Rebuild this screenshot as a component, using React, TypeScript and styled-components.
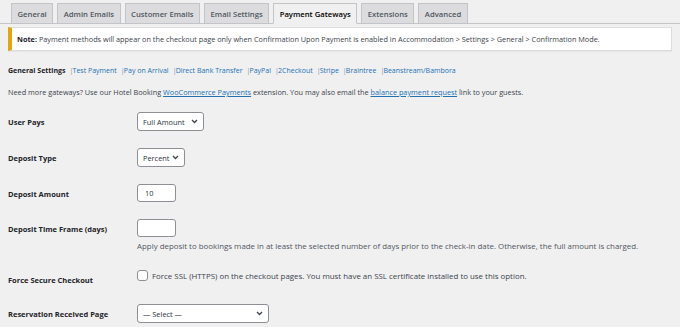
import React from "react";
import styled, { createGlobalStyle } from "styled-components";

const Global = createGlobalStyle`
  html, body { margin: 0; padding: 0; background: #f0f0f1; }
  body { font-family: "Open Sans", "Noto Sans", sans-serif; font-size: 7.3px; color: #3c434a; }
  * { box-sizing: border-box; }
`;

const Page = styled.div`
  padding: 3px 8px 0 8px;
  width: 680px;
  height: 327px;
  overflow: hidden;
`;

const TabBar = styled.nav`
  display: flex;
  gap: 4px;
  border-bottom: 1px solid #c3c4c7;
  margin: 0 -8px;
  padding: 0 0 0 11px;
  height: 21px;
`;

const Tab = styled.div<{ $active?: boolean }>`
  padding: 0 5.5px;
  display: flex;
  align-items: center;
  font-weight: 600;
  font-size: 7.7px;
  color: ${(p) => (p.$active ? "#000" : "#50575e")};
  background: ${(p) => (p.$active ? "#f0f0f1" : "#dcdcde")};
  border: 1px solid #c3c4c7;
  border-bottom: ${(p) => (p.$active ? "1px solid #f0f0f1" : "none")};
  margin-bottom: ${(p) => (p.$active ? "-1px" : "0")};
  height: ${(p) => (p.$active ? "21px" : "20px")};
  align-self: flex-end;
`;

const Notice = styled.div`
  margin-top: 3px;
  background: #fff;
  border: 1px solid #dcdcde;
  border-left: 4px solid #dba617;
  box-shadow: 0 1px 1px rgba(0, 0, 0, 0.04);
  height: 24px;
  display: flex;
  align-items: center;
  padding-left: 5px;
  color: #3c434a;
  strong { font-weight: 700; color: #1d2327; }
`;

const SubNav = styled.div`
  margin-top: 15px;
  display: flex;
  align-items: center;
  font-size: 7px;
  color: #3c434a;
  b { font-weight: 700; color: #1d2327; font-size: 7px; }
`;

const Sep = styled.span`
  color: #8c8f94;
  margin: 0 0 0 4px;
  width: 3px;
`;

const Link = styled.a`
  color: #2271b1;
  text-decoration: none;
`;

const ULink = styled.a`
  color: #2271b1;
  text-decoration: underline;
`;

const Intro = styled.p`
  margin: 12px 0 0 0;
`;

const Form = styled.div`
  margin-top: 15px;
  display: flex;
  flex-direction: column;
`;

const Row = styled.div<{ $h: number }>`
  display: grid;
  grid-template-columns: 129px 1fr;
  align-items: start;
  height: ${(p) => p.$h}px;
`;

const Label = styled.div`
  font-weight: 700;
  font-size: 7.5px;
  color: #1d2327;
  padding-top: 5px;
`;

const Field = styled.div`
  display: flex;
  flex-direction: column;
  align-items: flex-start;
  font-size: 7.9px;
`;

const Select = styled.div<{ $w: number }>`
  width: ${(p) => p.$w}px;
  height: 19px;
  background: #fff;
  border: 1px solid #8c8f94;
  border-radius: 3px;
  display: flex;
  align-items: center;
  justify-content: space-between;
  padding: 0 5px 0 5px;
  font-size: 7.4px;
  color: #2c3338;
`;

const Input = styled.div`
  width: 39px;
  height: 18px;
  background: #fff;
  border: 1px solid #8c8f94;
  border-radius: 3px;
  padding: 0 7px;
  display: flex;
  align-items: center;
  font-size: 7.4px;
  color: #2c3338;
`;

const Desc = styled.div`
  margin-top: 4px;
  color: #50575e;
`;

const CheckLine = styled.label`
  display: flex;
  align-items: center;
  gap: 4px;
`;

const Box = styled.span`
  width: 11px;
  height: 11px;
  border: 1px solid #8c8f94;
  border-radius: 3px;
  background: #fff;
  display: inline-block;
`;

const Chevron = () => (
  <svg width="7" height="5" viewBox="0 0 7 5">
    <path d="M1 1 L3.5 3.5 L6 1" fill="none" stroke="#3c434a" strokeWidth="1.3" />
  </svg>
);

const links = ["Test Payment", "Pay on Arrival", "Direct Bank Transfer", "PayPal", "2Checkout", "Stripe", "Braintree", "Beanstream/Bambora"];

export default function App() {
  return (
    <>
      <Global />
      <Page>
        <TabBar>
          <Tab>General</Tab>
          <Tab>Admin Emails</Tab>
          <Tab>Customer Emails</Tab>
          <Tab>Email Settings</Tab>
          <Tab $active>Payment Gateways</Tab>
          <Tab>Extensions</Tab>
          <Tab>Advanced</Tab>
        </TabBar>
        <Notice>
          <span>
            <strong>Note:</strong> Payment methods will appear on the checkout page only when Confirmation Upon Payment is enabled in Accommodation &gt; Settings &gt; General &gt; Confirmation Mode.
          </span>
        </Notice>
        <SubNav>
          <b>General Settings</b>
          {links.map((l) => (
            <React.Fragment key={l}>
              <Sep>|</Sep>
              <Link>{l}</Link>
            </React.Fragment>
          ))}
        </SubNav>
        <Intro>
          Need more gateways? Use our Hotel Booking <ULink>WooCommerce Payments</ULink> extension. You may also email the <ULink>balance payment request</ULink> link to your guests.
        </Intro>
        <Form>
          <Row $h={36}>
            <Label>User Pays</Label>
            <Field>
              <Select $w={67}>
                <span>Full Amount</span>
                <Chevron />
              </Select>
            </Field>
          </Row>
          <Row $h={36}>
            <Label>Deposit Type</Label>
            <Field>
              <Select $w={48}>
                <span>Percent</span>
                <Chevron />
              </Select>
            </Field>
          </Row>
          <Row $h={35}>
            <Label>Deposit Amount</Label>
            <Field>
              <Input>10</Input>
            </Field>
          </Row>
          <Row $h={51}>
            <Label>Deposit Time Frame (days)</Label>
            <Field>
              <Input />
              <Desc>Apply deposit to bookings made in at least the selected number of days prior to the check-in date. Otherwise, the full amount is charged.</Desc>
            </Field>
          </Row>
          <Row $h={34}>
            <Label>Force Secure Checkout</Label>
            <Field>
              <CheckLine>
                <Box />
                <span>Force SSL (HTTPS) on the checkout pages. You must have an SSL certificate installed to use this option.</span>
              </CheckLine>
            </Field>
          </Row>
          <Row $h={30}>
            <Label>Reservation Received Page</Label>
            <Field>
              <Select $w={132}>
                <span>— Select —</span>
                <Chevron />
              </Select>
            </Field>
          </Row>
        </Form>
      </Page>
    </>
  );
}
